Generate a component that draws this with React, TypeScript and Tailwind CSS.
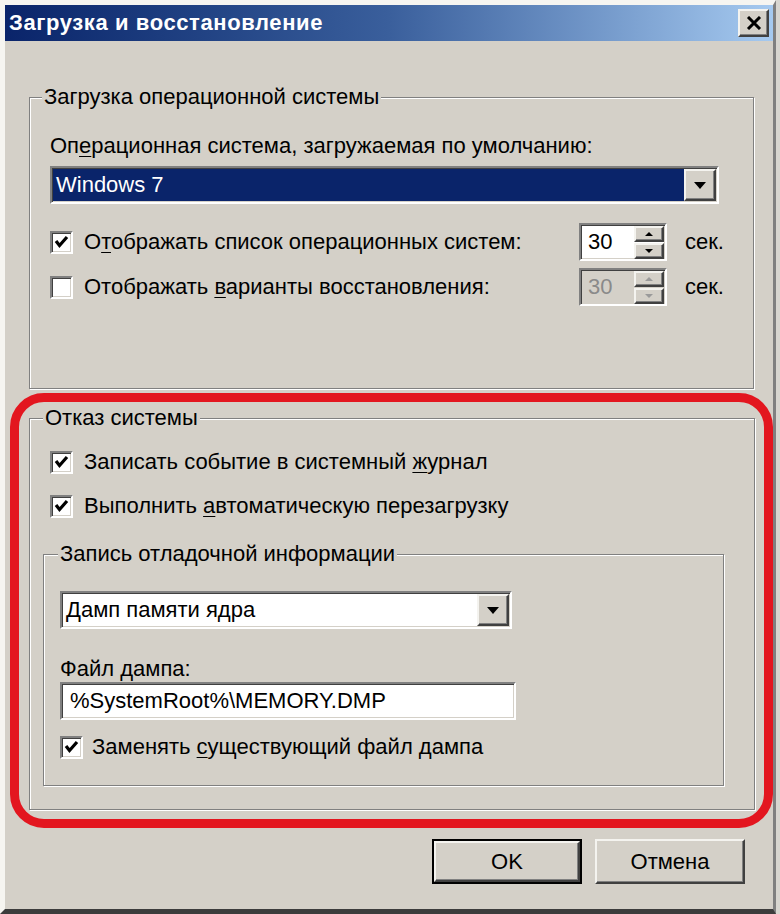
import React from "react";

const FONT = "font-['Liberation_Sans',Arial,sans-serif]";
const SUNKEN =
  "border-2 border-t-[#808080] border-l-[#808080] border-b-white border-r-white shadow-[inset_1px_1px_0_#404040,inset_-1px_-1px_0_#d4d0c8]";
const RAISED =
  "bg-[#d4d0c8] border-2 border-t-[#f4f3ef] border-l-[#f4f3ef] border-b-[#404040] border-r-[#404040] shadow-[inset_-1px_-1px_0_#808080]";

function U({ children }: { children: React.ReactNode }) {
  return <span className="underline decoration-1 underline-offset-[3px]">{children}</span>;
}

function Check({ checked }: { checked: boolean }) {
  return (
    <span className={`w-[23px] h-[23px] shrink-0 bg-white flex items-center justify-center ${SUNKEN}`}>
      {checked && (
        <svg width="15" height="14" viewBox="0 0 15 14">
          <polyline points="2,6 5.5,10.5 13,2" stroke="#000" strokeWidth="3.2" fill="none" />
        </svg>
      )}
    </span>
  );
}

function DropBtn() {
  return (
    <div className={`w-[32px] h-full flex items-center justify-center ${RAISED}`}>
      <svg width="12" height="7" viewBox="0 0 12 7">
        <polygon points="0,0 12,0 6,7" fill="#000" />
      </svg>
    </div>
  );
}

function Combo({ text, selected, w }: { text: string; selected?: boolean; w: string }) {
  return (
    <div className={`${w} h-[38px] flex bg-white ${SUNKEN} p-[1px]`}>
      <div
        className={`flex-1 flex items-center pl-[3px] ${
          selected ? "bg-[#0a246a] text-white" : "bg-white text-black"
        }`}
      >
        {text}
      </div>
      <DropBtn />
    </div>
  );
}

function Spinner({ disabled }: { disabled?: boolean }) {
  const tri = disabled ? "#9a9a9a" : "#000";
  return (
    <div
      className={`w-[88px] h-[38px] flex items-center ${SUNKEN} ${
        disabled ? "bg-[#d4d0c8] text-[#8a8a8a]" : "bg-white text-black"
      }`}
    >
      <div className="flex-1 pl-[7px]">30</div>
      <div className="flex flex-col gap-[1px] pr-[1px]">
        <div className={`w-[30px] h-[16px] flex items-center justify-center ${RAISED}`}>
          <svg width="8" height="4" viewBox="0 0 8 4">
            <polygon points="0,4 8,4 4,0" fill={tri} />
          </svg>
        </div>
        <div className={`w-[30px] h-[16px] flex items-center justify-center ${RAISED}`}>
          <svg width="8" height="4" viewBox="0 0 8 4">
            <polygon points="0,0 8,0 4,4" fill={tri} />
          </svg>
        </div>
      </div>
    </div>
  );
}

const FIELDSET =
  "border border-[#808080] shadow-[1px_1px_0_#fff,inset_1px_1px_0_#fff] min-w-0";
const LEGEND = "bg-[#d4d0c8] px-[2px] leading-[24px]";

export default function App() {
  return (
    <div className={`w-[780px] h-[914px] bg-[#d4d0c8] text-[22px] leading-[24px] text-black ${FONT} border-r-4 border-r-[#d8d6d0]`}>
      <div className="h-full border-l-[5px] border-t-[5px] border-l-[#f6f5f1] border-t-[#f6f5f1] border-r-[3px] border-r-[#808080] border-b-[5px] border-b-[#3c3c3c] flex flex-col">
        {/* Title bar */}
        <div className="h-[36px] bg-gradient-to-r from-[#0a246a] via-[#3a5f9c] to-[#a6caf0] flex items-center justify-between pl-[4px] pr-[4px]">
          <span className="text-white font-bold text-[22px] tracking-[0.6px]">Загрузка и восстановление</span>
          <div className={`w-[31px] h-[28px] flex items-center justify-center ${RAISED}`}>
            <svg width="16" height="14" viewBox="0 0 16 14">
              <path d="M2 1 L14 13 M14 1 L2 13" stroke="#000" strokeWidth="3" />
            </svg>
          </div>
        </div>

        {/* Group 1 */}
        <fieldset className={`${FIELDSET} mt-[44px] ml-[24px] mr-[19px] h-[304px] pl-[20px] pr-[20px]`}>
          <legend className={`${LEGEND} ml-[-8px]`}>Загрузка операционной системы</legend>
          <div className="pt-[25px]">
            Оп<U>е</U>рационная система, загружаемая по умолчанию:
          </div>
          <div className="mt-[8px]">
            <Combo text="Windows 7" selected w="w-[669px]" />
          </div>
          <div className="mt-[19px] flex items-center">
            <div className="w-[529px] flex items-center gap-[11px]">
              <Check checked />
              <span>
                О<U>т</U>ображать список операционных систем:
              </span>
            </div>
            <Spinner />
            <span className="ml-[18px]">сек.</span>
          </div>
          <div className="mt-[7px] flex items-center">
            <div className="w-[529px] flex items-center gap-[11px]">
              <Check checked={false} />
              <span>
                Отображать <U>в</U>арианты восстановления:
              </span>
            </div>
            <Spinner disabled />
            <span className="ml-[18px]">сек.</span>
          </div>
        </fieldset>

        {/* Red highlight around group 2 */}
        <div className="mt-[4px] ml-[5px] w-[763px] border-[9px] border-[#e3161f] rounded-[34px] pt-[4px] pl-[10px] pr-[9px] pb-[9px]">
          <fieldset className={`${FIELDSET} h-[404px] pl-[13px]`}>
            <legend className={`${LEGEND} ml-0`}>Отказ системы</legend>
            <div className="pt-[20px] pl-[7px] flex items-center gap-[11px]">
              <Check checked />
              <span>
                Записать событие в системный <U>ж</U>урнал
              </span>
            </div>
            <div className="mt-[20px] pl-[7px] flex items-center gap-[11px]">
              <Check checked />
              <span>
                Выполнить <U>а</U>втоматическую перезагрузку
              </span>
            </div>
            <fieldset className={`${FIELDSET} mt-[24px] w-[681px] h-[244px] pl-[16px]`}>
              <legend className={`${LEGEND} ml-[-2px]`}>Запись отладочной информации</legend>
              <div className="pt-[25px]">
                <Combo text="Дамп памяти ядра" w="w-[452px]" />
              </div>
              <div className="mt-[28px]">Файл дампа:</div>
              <div className={`mt-[1px] w-[456px] h-[38px] bg-white flex items-center pl-[8px] ${SUNKEN}`}>
                %SystemRoot%\MEMORY.DMP
              </div>
              <div className="mt-[15px] flex items-center gap-[9px]">
                <Check checked />
                <span>
                  Заменять <U>с</U>уществующий файл дампа
                </span>
              </div>
            </fieldset>
          </fieldset>
        </div>

        {/* Buttons */}
        <div className="mt-[11px] flex justify-end gap-[13px] pr-[28px]">
          <div className="w-[150px] h-[45px] border-[2px] border-black">
            <div className={`w-full h-full flex items-center justify-center ${RAISED}`}>OK</div>
          </div>
          <div className={`w-[150px] h-[45px] flex items-center justify-center ${RAISED}`}>Отмена</div>
        </div>
      </div>
    </div>
  );
}
